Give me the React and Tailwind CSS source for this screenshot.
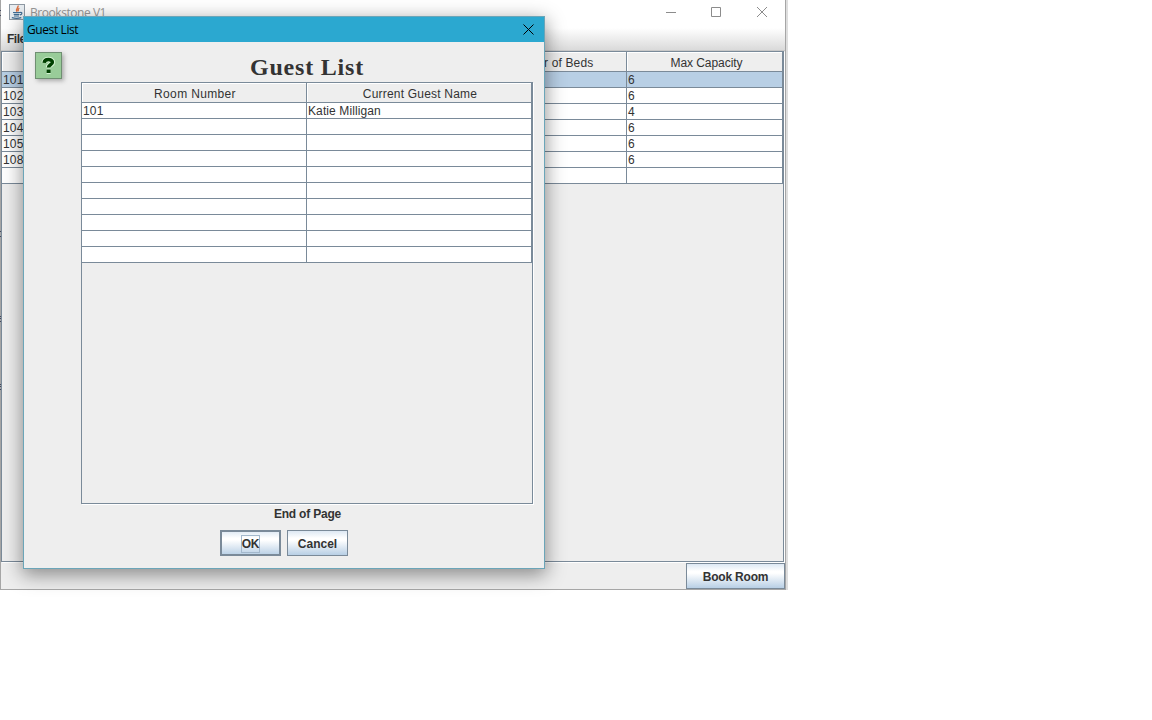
const bedRows = [
  ["101", "6"],
  ["102", "6"],
  ["103", "4"],
  ["104", "6"],
  ["105", "6"],
  ["108", "6"],
  ["", ""],
];
const guestRows = [["101", "Katie Milligan"], ...Array.from({ length: 9 }, () => ["", ""])];

const border = "border-[#7a8a99]";

function HeaderCell({ className = "", children }) {
  return (
    <div
      className={`flex h-5 shrink-0 items-center justify-center border-r border-b border-[#7a8a99] bg-[#eee] pt-[2px] whitespace-nowrap shadow-[inset_1px_1px_0_#fff] ${className}`}
    >
      {children}
    </div>
  );
}

function Cell({ className = "", children }) {
  return (
    <div className={`h-4 shrink-0 border-r border-b border-[#7a8a99] pl-px leading-4 whitespace-nowrap ${className}`}>
      {children}
    </div>
  );
}

function Button({ className = "", children }) {
  return (
    <button
      className={`flex h-[26px] items-center justify-center border border-[#7a8a99] bg-[linear-gradient(#dde8f3_0%,#fff_30%,#fff_38%,#b8cfe5_100%)] pt-px font-bold whitespace-nowrap ${className}`}
    >
      {children}
    </button>
  );
}

function JavaIcon() {
  return (
    <svg className="h-4 w-4 shrink-0" viewBox="0 0 16 16" fill="none">
      <rect x="0.5" y="0.5" width="15" height="15" fill="#e9eef2" stroke="#8f9aa4" />
      <path d="M9 1.5C10 3.4 6.4 4.3 7.9 7.6M10.3 4C8.6 5 9 6 9.3 7.4" stroke="#dc7040" strokeWidth="1.4" />
      <path d="M4 8.5h7M4.7 10.3h5.6M5 12h5M2.8 13.7c3 .8 7 .7 9.5-.1M11 8.5c2.6-.7 2.4 1.7-.1 2.4" stroke="#3f6d94" strokeWidth="1.2" />
    </svg>
  );
}

function MainWindow() {
  return (
    <div className="flex h-[590px] w-[786px] flex-col border-r border-b border-l border-[#a6a6a6] bg-[#eee] shadow-[2px_0_0_#dedede]">
      <div className="flex h-7 shrink-0 items-center bg-white pr-[6px] pl-2">
        <div className="flex flex-1 items-center gap-[5px] pb-[4px]">
          <JavaIcon />
          <span className="pt-[2px] font-['Open_Sans',sans-serif] text-[12px] leading-4 tracking-[-0.45px] text-[#999]">
            Brookstone V1
          </span>
        </div>
        <svg className="mb-1 h-3 w-[122px] shrink-0" viewBox="0 0 122 12" fill="none" stroke="#8c8c8c">
          <path d="M9 6.5h10M54.5 1.5h9v9h-9zM100 1l10 10M110 1l-10 10" />
        </svg>
      </div>
      <div className="h-[23px] shrink-0 border-b border-[#c8c8c8] bg-[linear-gradient(#fff,#dadada)] pt-[3px] pl-[6px] leading-4 font-bold tracking-[-0.5px]">
        File
      </div>
      <div className="mr-px flex h-[511px] w-[783px] shrink-0 flex-col border border-[#7a8a99] shadow-[1px_1px_0_#fff]">
        <div className="flex">
          <HeaderCell className="w-[313px]">Room Number</HeaderCell>
          <HeaderCell className="w-[156px]">Style</HeaderCell>
          <HeaderCell className="w-[156px] pl-px tracking-[0.15px]">Number of Beds</HeaderCell>
          <HeaderCell className="w-[156px] pl-[4px] tracking-[-0.05px]">Max Capacity</HeaderCell>
        </div>
        {bedRows.map(([room, capacity], i) => (
          <div key={i} className={i === 0 ? "flex bg-[#b8cfe5]" : "flex bg-white"}>
            <Cell className="w-[469px] tracking-[0.2px]">{room}</Cell>
            <Cell className="w-[156px]" />
            <Cell className="w-[156px]">{capacity}</Cell>
          </div>
        ))}
      </div>
      <div className="flex flex-1 justify-end pt-px">
        <Button className="w-[99px] tracking-[-0.2px]">Book Room</Button>
      </div>
    </div>
  );
}

function EdgeMarks() {
  return (
    <svg className="absolute top-0 left-0 h-[400px] w-px" viewBox="0 0 1 400" stroke="#444a60">
      <path d="M0 10.5h1M0 15.5h1M0 231.5h1M0 236.5h1M0 316.5h1M0 318.5h1M0 321.5h1M0 384.5h1M0 386.5h1M0 389.5h1" />
    </svg>
  );
}

function GuestDialog() {
  return (
    <div className="absolute top-4 left-[23px] flex h-[553px] w-[522px] flex-col border border-[#6ba5b8] bg-[#eee] shadow-[0_5px_18px_1px_rgba(0,0,0,0.42)]">
      <div className="flex h-[25px] shrink-0 items-center justify-between bg-[#2ba8d0] pr-[10px] pl-[3px] text-black">
        <span className="font-['Open_Sans',sans-serif] text-[12px] leading-4 tracking-[-0.4px]">Guest List</span>
        <svg className="h-[11px] w-[11px]" viewBox="0 0 11 11" stroke="#000">
          <path d="M.5.5l10 10M10.5.5l-10 10" />
        </svg>
      </div>
      <div className="flex flex-1 gap-[18px] pl-[11px]">
        <svg className="mt-[10px] h-8 w-[28px] shrink-0 drop-shadow-[2px_2px_2px_#aaa]" viewBox="0 0 28 32">
          <rect x="0.5" y="0.5" width="26" height="26" fill="#99cc99" stroke="#6f8f72" />
          <path
            d="M9.2 10.8c.3-4.3 8.2-4.2 8.2-.6 0 2.6-3.9 2.5-3.9 5.2M11.6 19.2h4"
            fill="none"
            stroke="#d5f3d3"
            strokeWidth="5.6"
          />
          <path
            d="M9.2 10.8c.3-4.3 8.2-4.2 8.2-.6 0 2.6-3.9 2.5-3.9 5.2M11.6 19.2h4"
            fill="none"
            stroke="#004000"
            strokeWidth="3.5"
          />
        </svg>
        <div className="flex w-[452px] flex-col items-center">
          <h1 className="mt-[8px] h-[32px] font-['Liberation_Serif',serif] text-[24px] leading-[34px] font-bold tracking-[0.8px] text-[#333]">
            Guest List
          </h1>
          <div className={`h-[422px] w-[452px] border ${border} shadow-[1px_1px_0_#fff]`}>
            <div className="flex">
              <HeaderCell className="w-[225px] pl-[2px] tracking-[0.35px]">Room Number</HeaderCell>
              <HeaderCell className="w-[225px] pl-[2px] tracking-[0.2px]">Current Guest Name</HeaderCell>
            </div>
            {guestRows.map(([room, guest], i) => (
              <div key={i} className="flex bg-white">
                <Cell className="w-[225px] tracking-[0.2px]">{room}</Cell>
                <Cell className="w-[225px] tracking-[0.1px]">{guest}</Cell>
              </div>
            ))}
          </div>
          <div className="mt-[2px] leading-4 font-bold tracking-[-0.2px]">
            <span className="pl-px">End of Page</span>
          </div>
          <div className="mt-2 mr-[47px] flex gap-[6px]">
            <Button className="w-[61px] shadow-[inset_0_0_0_1px_#7a8a99]">
              <span className="ml-px border border-[#a3b8cc] leading-4 tracking-[-0.2px]">OK</span>
            </Button>
            <Button className="w-[61px] pl-px">Cancel</Button>
          </div>
        </div>
      </div>
    </div>
  );
}

export default function App() {
  return (
    <div className="relative h-[720px] w-[1152px] overflow-hidden bg-white font-['Liberation_Sans',Arial,sans-serif] text-[12px] text-[#333]">
      <MainWindow />
      <EdgeMarks />
      <GuestDialog />
    </div>
  );
}
